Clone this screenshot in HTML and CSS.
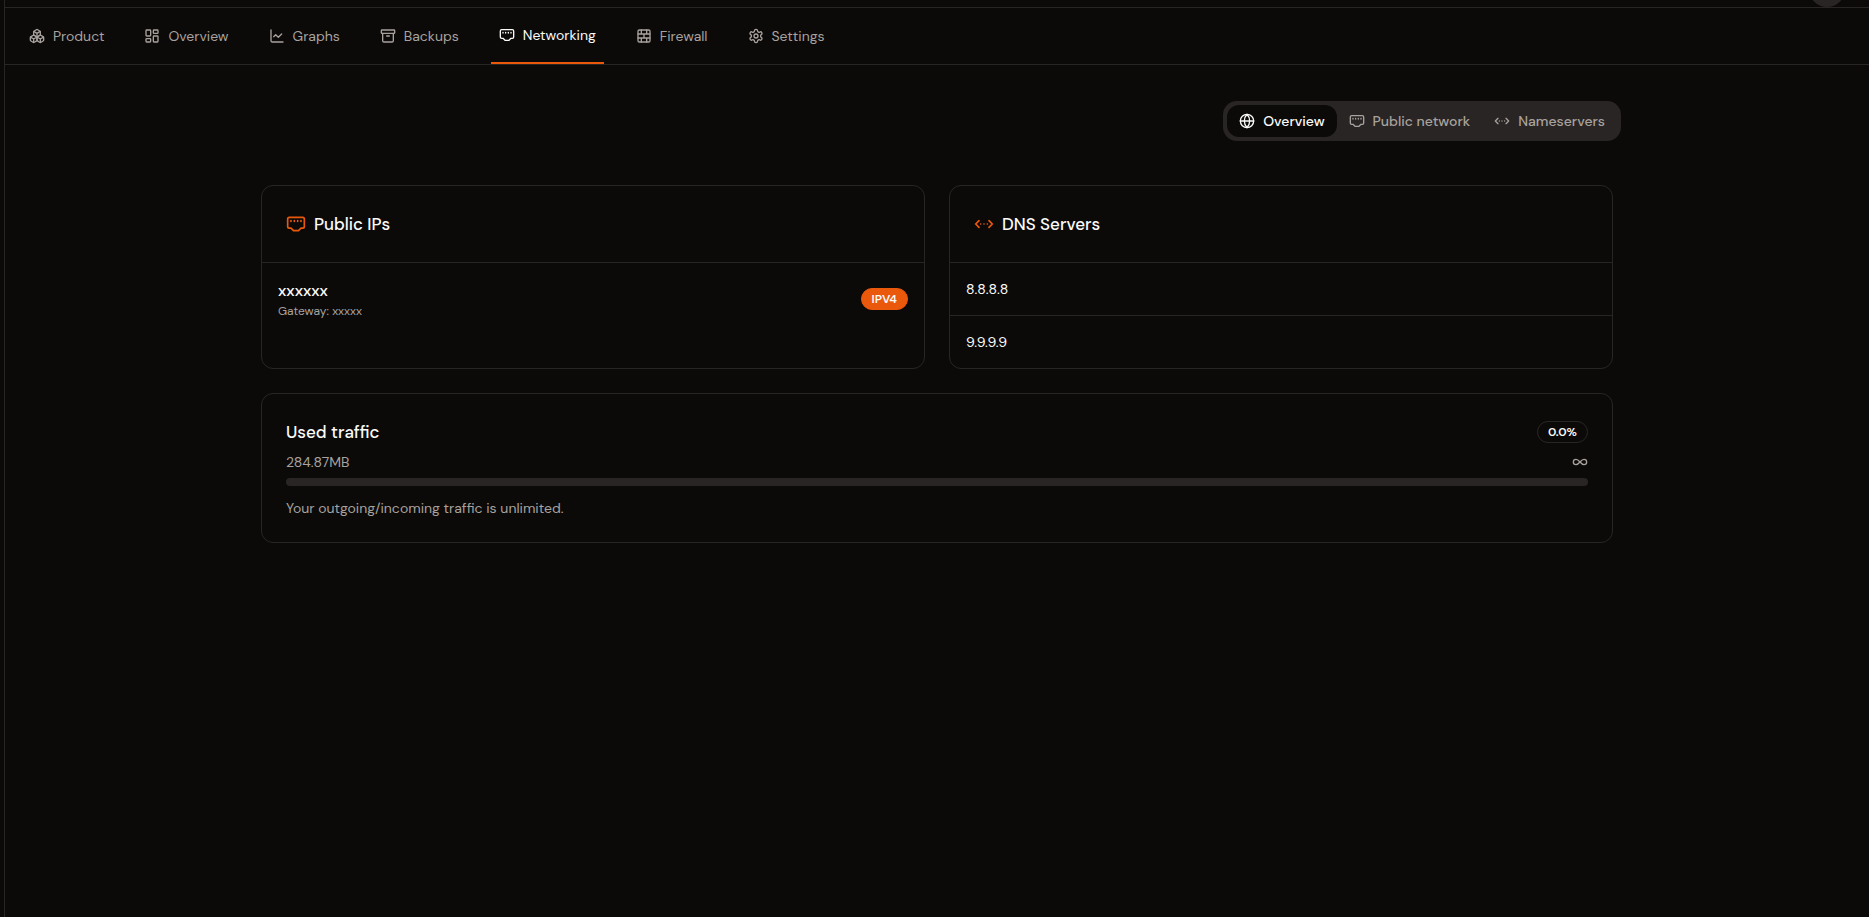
FILE: index.html
```html
<!DOCTYPE html>
<html lang="en">
<head>
    <meta charset="UTF-8">
    <meta name="viewport" content="width=device-width, initial-scale=1.0">
    <title>Networking</title>
    <link rel="stylesheet" href="styles.css">
</head>
<body>
<!-- shared icons -->
<svg class="sprite" aria-hidden="true">
    <symbol id="ethernet" viewBox="0 0 24 24">
        <path d="m15 20 3-3h2a2 2 0 0 0 2-2V6a2 2 0 0 0-2-2H4a2 2 0 0 0-2 2v9a2 2 0 0 0 2 2h2l3 3z"/>
        <path d="M6 8v1M10 8v1M14 8v1M18 8v1"/>
    </symbol>
    <symbol id="dns" viewBox="0 0 24 24">
        <path d="m18 8 4 4-4 4M6 8l-4 4 4 4M8 12h.01M12 12h.01M16 12h.01"/>
    </symbol>
</svg>

<div class="page">
    <header class="topbar">
        <div class="avatar"></div>
    </header>

    <nav class="tabs">
        <a href="#product">
            <svg class="icon" viewBox="0 0 24 24">
                <path d="M2.97 12.92A2 2 0 0 0 2 14.63v3.24a2 2 0 0 0 .97 1.71l3 1.8a2 2 0 0 0 2.06 0L12 19v-5.5l-5-3-4.03 2.42Z"/>
                <path d="m7 16.5-4.74-2.85M7 16.5l5-3M7 16.5v5.17"/>
                <path d="M12 13.5V19l3.97 2.38a2 2 0 0 0 2.06 0l3-1.8a2 2 0 0 0 .97-1.71v-3.24a2 2 0 0 0-.97-1.71L17 10.5l-5 3Z"/>
                <path d="m17 16.5-5-3M17 16.5l4.74-2.85M17 16.5v5.17"/>
                <path d="M7.97 4.42A2 2 0 0 0 7 6.13v4.37l5 3 5-3V6.13a2 2 0 0 0-.97-1.71l-3-1.8a2 2 0 0 0-2.06 0l-3 1.8Z"/>
                <path d="M12 8 7.26 5.15M12 8l4.74-2.85M12 13.5V8"/>
            </svg>
            Product
        </a>
        <a href="#overview">
            <svg class="icon" viewBox="0 0 24 24">
                <rect width="7" height="9" x="3" y="3" rx="1"/>
                <rect width="7" height="5" x="14" y="3" rx="1"/>
                <rect width="7" height="9" x="14" y="12" rx="1"/>
                <rect width="7" height="5" x="3" y="16" rx="1"/>
            </svg>
            Overview
        </a>
        <a href="#graphs">
            <svg class="icon" viewBox="0 0 24 24">
                <path d="M3 3v16a2 2 0 0 0 2 2h16"/>
                <path d="m19 9-5 5-4-4-3 3"/>
            </svg>
            Graphs
        </a>
        <a href="#backups">
            <svg class="icon" viewBox="0 0 24 24">
                <rect width="20" height="5" x="2" y="3" rx="1"/>
                <path d="M4 8v11a2 2 0 0 0 2 2h12a2 2 0 0 0 2-2V8M10 12h4"/>
            </svg>
            Backups
        </a>
        <a href="#networking" class="active">
            <svg class="icon"><use href="#ethernet"/></svg>
            Networking
        </a>
        <a href="#firewall">
            <svg class="icon" viewBox="0 0 24 24">
                <rect width="18" height="18" x="3" y="3" rx="2"/>
                <path d="M12 9v6M16 15v6M16 3v6M3 15h18M3 9h18M8 15v6M8 3v6"/>
            </svg>
            Firewall
        </a>
        <a href="#settings">
            <svg class="icon" viewBox="0 0 24 24">
                <path d="M12.22 2h-.44a2 2 0 0 0-2 2v.18a2 2 0 0 1-1 1.73l-.43.25a2 2 0 0 1-2 0l-.15-.08a2 2 0 0 0-2.73.73l-.22.38a2 2 0 0 0 .73 2.73l.15.1a2 2 0 0 1 1 1.72v.51a2 2 0 0 1-1 1.74l-.15.09a2 2 0 0 0-.73 2.73l.22.38a2 2 0 0 0 2.73.73l.15-.08a2 2 0 0 1 2 0l.43.25a2 2 0 0 1 1 1.73V20a2 2 0 0 0 2 2h.44a2 2 0 0 0 2-2v-.18a2 2 0 0 1 1-1.73l.43-.25a2 2 0 0 1 2 0l.15.08a2 2 0 0 0 2.73-.73l.22-.39a2 2 0 0 0-.73-2.73l-.15-.08a2 2 0 0 1-1-1.74v-.5a2 2 0 0 1 1-1.74l.15-.09a2 2 0 0 0 .73-2.73l-.22-.38a2 2 0 0 0-2.73-.73l-.15.08a2 2 0 0 1-2 0l-.43-.25a2 2 0 0 1-1-1.73V4a2 2 0 0 0-2-2z"/>
                <circle cx="12" cy="12" r="3"/>
            </svg>
            Settings
        </a>
    </nav>

    <main class="container">
        <div class="switch-row">
            <div class="switch">
                <button type="button" class="active">
                    <svg class="icon" viewBox="0 0 24 24">
                        <circle cx="12" cy="12" r="10"/>
                        <path d="M12 2a14.5 14.5 0 0 0 0 20 14.5 14.5 0 0 0 0-20M2 12h20"/>
                    </svg>
                    Overview
                </button>
                <button type="button">
                    <svg class="icon"><use href="#ethernet"/></svg>
                    Public network
                </button>
                <button type="button">
                    <svg class="icon"><use href="#dns"/></svg>
                    Nameservers
                </button>
            </div>
        </div>

        <div class="cards">
            <section class="card">
                <div class="card-header">
                    <svg class="icon"><use href="#ethernet"/></svg>
                    <h2>Public IPs</h2>
                </div>
                <div class="ip-row">
                    <div>
                        <p class="ip">xxxxxx</p>
                        <p class="gateway">Gateway: xxxxx</p>
                    </div>
                    <span class="badge badge-orange">IPV4</span>
                </div>
            </section>

            <section class="card">
                <div class="card-header">
                    <svg class="icon"><use href="#dns"/></svg>
                    <h2>DNS Servers</h2>
                </div>
                <ul class="dns-list">
                    <li>8.8.8.8</li>
                    <li>9.9.9.9</li>
                </ul>
            </section>

            <section class="card traffic">
                <div class="line">
                    <h2 id="traffic-title">Used traffic</h2>
                    <span class="badge">0.0%</span>
                </div>
                <div class="line usage">
                    <span>284.87MB</span>
                    <svg class="icon" viewBox="0 0 24 24">
                        <path d="M6 16c5 0 7-8 12-8a4 4 0 0 1 0 8c-5 0-7-8-12-8a4 4 0 1 0 0 8"/>
                    </svg>
                </div>
                <progress value="0" max="100" aria-labelledby="traffic-title"></progress>
                <p>Your outgoing/incoming traffic is unlimited.</p>
            </section>
        </div>
    </main>
</div>
</body>
</html>
```
FILE: styles.css
```css
* {
    box-sizing: border-box;
}
body {
    margin: 0;
    background-color: #0c0a09;
    color: #fafaf9;
    font-family: "DM Sans", Inter, sans-serif;
    font-size: 14px;
    line-height: 20px;
}
h2, p, ul {
    margin: 0;
    padding: 0;
}
h2 {
    font-size: 17px;
    font-weight: 500;
    line-height: 28px;
}
.sprite {
    display: none;
}
.icon {
    width: 16px;
    height: 16px;
    flex: none;
    fill: none;
    stroke: currentColor;
    stroke-width: 2;
    stroke-linecap: round;
    stroke-linejoin: round;
}

.page {
    min-height: 100vh;
    margin-left: 4px;
    border-left: 1px solid #292524;
}

/* only the lower edge of the top bar shows */
.topbar {
    display: flex;
    justify-content: flex-end;
    align-items: flex-end;
    height: 8px;
    padding: 0 24px;
    border-bottom: 1px solid #292524;
    overflow: hidden;
}
.avatar {
    width: 36px;
    height: 36px;
    flex: none;
    border-radius: 50%;
    background-color: #292524;
}

.tabs {
    display: flex;
    gap: 24px;
    height: 57px;
    padding: 0 16px;
    border-bottom: 1px solid #292524;
}
.tabs a {
    display: flex;
    align-items: center;
    gap: 8px;
    padding: 0 8px;
    color: #a8a29e;
    text-decoration: none;
}
.tabs a.active {
    color: #fafaf9;
    border-bottom: 2px solid #ea580c;
}

.container {
    max-width: 1400px;
    margin: 0 auto;
    padding: 36px 0;
}
.switch-row {
    display: flex;
    justify-content: flex-end;
    padding: 0 16px;
    margin-bottom: 44px;
}
.switch {
    display: flex;
    padding: 4px;
    border-radius: 14px;
    background-color: #292524;
}
.switch button {
    display: flex;
    align-items: center;
    gap: 8px;
    height: 32px;
    padding: 0 12px;
    border: 0;
    border-radius: 12px;
    background: none;
    color: #a8a29e;
    font: inherit;
    font-weight: 500;
    cursor: pointer;
}
.switch button.active {
    background-color: #0c0a09;
    color: #fafaf9;
}

.cards {
    display: grid;
    grid-template-columns: 1fr 1fr;
    gap: 24px;
    padding: 0 24px;
}
.card {
    border: 1px solid #292524;
    border-radius: 12px;
}
.card-header {
    display: flex;
    align-items: center;
    gap: 8px;
    padding: 24px;
    border-bottom: 1px solid #292524;
}
.card-header .icon {
    width: 20px;
    height: 20px;
    color: #ea580c;
}
.ip-row {
    display: flex;
    justify-content: space-between;
    align-items: center;
    padding: 16px;
}
.ip {
    font-size: 16px;
    font-weight: 500;
    line-height: 24px;
}
.gateway {
    color: #a8a29e;
    font-size: 12px;
    line-height: 16px;
}
.badge {
    padding: 2px 10px;
    border: 1px solid #292524;
    border-radius: 11px;
    font-size: 12px;
    font-weight: 600;
    line-height: 16px;
}
.badge-orange {
    border-color: #ea580c;
    background-color: #ea580c;
}
.dns-list {
    list-style: none;
}
.dns-list li {
    padding: 16px;
}
.dns-list li + li {
    border-top: 1px solid #292524;
}

.traffic {
    grid-column: 1 / -1;
    padding: 24px;
    color: #a8a29e;
}
.traffic h2, .traffic .badge {
    color: #fafaf9;
}
.line {
    display: flex;
    justify-content: space-between;
    align-items: center;
}
.usage {
    margin: 6px 0;
}
progress {
    display: block;
    width: 100%;
    height: 8px;
    margin-bottom: 12px;
    border: 0;
    border-radius: 4px;
    background-color: #292524;
    overflow: hidden;
    appearance: none;
}
progress::-webkit-progress-bar {
    background-color: #292524;
}
progress::-webkit-progress-value {
    background-color: #ea580c;
}
```
